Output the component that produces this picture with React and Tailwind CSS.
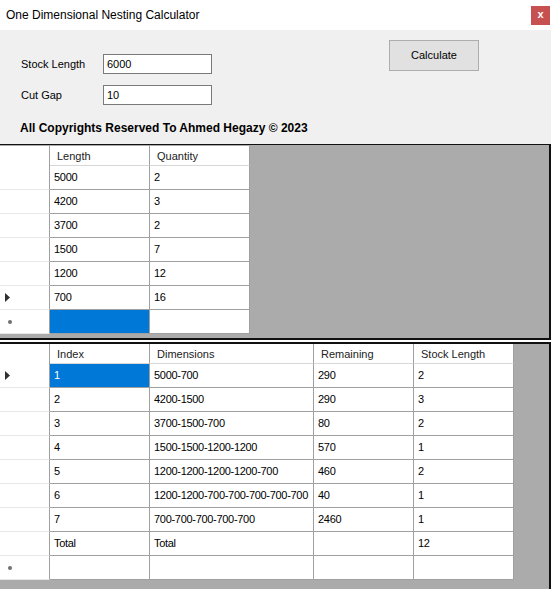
import React from 'react';

const FONT = { fontFamily: '"Liberation Sans", Arial, sans-serif' };

const pieces = [
  ['5000', '2'],
  ['4200', '3'],
  ['3700', '2'],
  ['1500', '7'],
  ['1200', '12'],
  ['700', '16'],
];

const results = [
  ['1', '5000-700', '290', '2'],
  ['2', '4200-1500', '290', '3'],
  ['3', '3700-1500-700', '80', '2'],
  ['4', '1500-1500-1200-1200', '570', '1'],
  ['5', '1200-1200-1200-1200-700', '460', '2'],
  ['6', '1200-1200-700-700-700-700-700', '40', '1'],
  ['7', '700-700-700-700-700', '2460', '1'],
  ['Total', 'Total', '', '12'],
];

function Arrow() {
  return (
    <svg width="5" height="9" viewBox="0 0 5 9">
      <path d="M0 0 L5 4.5 L0 9 Z" fill="#303030" />
    </svg>
  );
}

function NewRowMark() {
  return <div className="w-[4px] h-[4px] rounded-full bg-[#707070]" />;
}

// one DataGridView: header row, data rows, trailing "new row"
function Grid({ widths, headers, rows, current, selected, newSelected }) {
  return (
    <div className="flex flex-col">
      <div className="flex h-[20px]">
        <div className="w-[50px] bg-white border-r border-[#a0a0a0]" />
        {headers.map((h, i) => (
          <div
            key={h}
            style={{ width: widths[i] }}
            className="flex items-center pl-[7px] pt-px bg-white border-r border-[#a0a0a0] border-b border-b-[#d8d8d8] text-[11px] text-[#222]"
          >
            {h}
          </div>
        ))}
      </div>
      {rows.map((r, ri) => (
        <div key={ri} className="flex h-[24px]">
          <div className="w-[50px] flex items-center pl-[5px] bg-white border-r border-[#a0a0a0] border-b border-b-[#e8e8e8]">
            {ri === current && <Arrow />}
          </div>
          {r.map((c, ci) => (
            <div
              key={ci}
              style={{ width: widths[ci] }}
              className={`flex items-center pl-[4px] border-r border-b border-[#a0a0a0] text-[11px] tracking-[-0.3px] whitespace-nowrap overflow-hidden ${
                ri === selected && ci === 0 ? 'bg-[#0078d7] text-white' : 'bg-white text-black'
              }`}
            >
              {c}
            </div>
          ))}
        </div>
      ))}
      <div className="flex h-[24px]">
        <div className="w-[50px] flex items-center pl-[8px] bg-white border-r border-[#a0a0a0] border-b border-b-[#e8e8e8]">
          <NewRowMark />
        </div>
        {widths.map((w, ci) => (
          <div
            key={ci}
            style={{ width: w }}
            className={`border-r border-b border-[#a0a0a0] ${newSelected && ci === 0 ? 'bg-[#0078d7]' : 'bg-white'}`}
          />
        ))}
      </div>
    </div>
  );
}

export default function App() {
  return (
    <div className="w-[551px] h-[589px] overflow-hidden bg-[#f0f0f0] flex flex-col" style={FONT}>
      {/* title bar */}
      <div className="h-[30px] shrink-0 bg-white flex items-center pl-[6px] pr-[1px]">
        <span className="text-[12px] text-black">One Dimensional Nesting Calculator</span>
        <div className="ml-auto w-[19px] h-[19px] bg-[#c75050] flex items-center justify-center text-white text-[11px] font-bold leading-none pb-[2px]">
          x
        </div>
      </div>

      {/* inputs */}
      <div className="h-[114px] shrink-0 flex flex-col">
        <div className="flex">
          <div className="flex flex-col gap-[11px] pt-[24px] pl-[21px]">
            <div className="flex items-center">
              <span className="w-[82px] text-[11px] text-black">Stock Length</span>
              <div className="w-[109px] h-[20px] bg-white border border-[#7a7a7a] pl-[3px] flex items-center text-[11px]">6000</div>
            </div>
            <div className="flex items-center">
              <span className="w-[82px] text-[11px] text-black">Cut Gap</span>
              <div className="w-[109px] h-[20px] bg-white border border-[#7a7a7a] pl-[3px] flex items-center text-[11px]">10</div>
            </div>
          </div>
          <div className="ml-auto mr-[72px] mt-[10px] w-[90px] h-[31px] bg-[#e1e1e1] border border-[#adadad] flex items-center justify-center text-[11px] text-black">
            Calculate
          </div>
        </div>
        <div className="pl-[20px] mt-[16px] text-[12px] font-bold text-black leading-[14px]">
          All Copyrights Reserved To Ahmed Hegazy © 2023
        </div>
      </div>

      {/* pieces grid */}
      <div className="h-[196px] shrink-0 bg-[#ababab] border-t border-r-2 border-b-2 border-[#111] pt-px">
        <Grid
          widths={[100, 100]}
          headers={['Length', 'Quantity']}
          rows={pieces}
          current={5}
          selected={-1}
          newSelected
        />
      </div>

      <div className="h-[2px] shrink-0 bg-white" />

      {/* results grid */}
      <div className="flex-1 bg-[#ababab] border-t-2 border-r-2 border-[#111]">
        <Grid
          widths={[100, 164, 100, 100]}
          headers={['Index', 'Dimensions', 'Remaining', 'Stock Length']}
          rows={results}
          current={0}
          selected={0}
        />
      </div>
    </div>
  );
}
